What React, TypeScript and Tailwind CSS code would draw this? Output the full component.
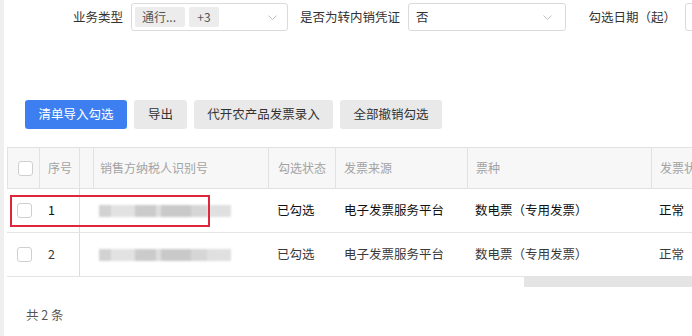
import React from "react";

const Chevron = () => (
  <svg width="9" height="5" viewBox="0 0 9 5" className="shrink-0">
    <polyline points="0.5,0.5 4.5,4.5 8.5,0.5" fill="none" stroke="#c0c0c0" strokeWidth="1" />
  </svg>
);

const Checkbox = () => (
  <div className="w-[15px] h-[15px] rounded-[3px] border border-[#cfcfcf] bg-white" />
);

const Blur = () => (
  <div className="w-[132px] h-[12px] blur-[1.2px] bg-[linear-gradient(90deg,#d2d2d2_0%,#d2d2d2_9%,#e2e2e2_9%,#e2e2e2_27%,#cbcbcb_27%,#cbcbcb_43%,#dedede_43%,#dedede_47%,#c9c9c9_47%,#c9c9c9_70%,#d6d6d6_70%,#d6d6d6_82%,#e0e0e0_82%,#e0e0e0_100%)]" />
);

const cols = [
  { w: "w-[33px]" },
  { w: "w-[40px]" },
  { w: "w-[14px]" },
  { w: "w-[175px]" },
  { w: "w-[67px]" },
  { w: "w-[132px]" },
  { w: "w-[184px]" },
  { w: "w-[100px]" },
];

const Row = ({ n, dark, marked }: { n: string; dark: boolean; marked?: boolean }) => (
  <div
    className={`relative flex h-[44px] border-b border-[#e4e4e4] text-[12.5px] ${
      dark ? "text-[#111]" : "text-[#3a3a3a]"
    }`}
  >
    <div className={`${cols[0].w} shrink-0 flex items-center pl-[10px]`}>
      <Checkbox />
    </div>
    <div className={`${cols[1].w} shrink-0 flex items-center pl-[8px] border-r border-[#dcdcdc]`}>{n}</div>
    <div className={`${cols[2].w} shrink-0`} />
    <div className={`${cols[3].w} shrink-0 flex items-center pl-[5px]`}>
      <Blur />
    </div>
    <div className={`${cols[4].w} shrink-0 flex items-center pl-[8px]`}>已勾选</div>
    <div className={`${cols[5].w} shrink-0 flex items-center pl-[8px]`}>电子发票服务平台</div>
    <div className={`${cols[6].w} shrink-0 flex items-center pl-[7px]`}>数电票（专用发票）</div>
    <div className={`${cols[7].w} shrink-0 flex items-center pl-[7px]`}>正常</div>
    {marked && (
      <div className="absolute left-[3px] top-[6px] w-[200px] h-[32px] border-2 border-[#e0263c]" />
    )}
  </div>
);

export default function App() {
  const headers = ["", "序号", "", "销售方纳税人识别号", "勾选状态", "发票来源", "票种", "发票状态"];
  return (
    <div
      className="w-[692px] h-[336px] overflow-hidden bg-white flex"
      style={{ fontFamily: '"Noto Sans CJK SC", "Noto Sans", sans-serif' }}
    >
      <div className="w-[4px] shrink-0 bg-[#efefef]" />
      <div className="flex-1 flex flex-col min-w-0">
        {/* filters */}
        <div className="mt-[3px] h-[28px] flex items-center text-[12.5px] text-[#333] whitespace-nowrap">
          <div className="w-[119px] shrink-0 text-right">业务类型</div>
          <div className="ml-[8px] w-[157px] h-[28px] shrink-0 border border-[#dadada] rounded-[3px] flex items-center pl-[3px] pr-[10px]">
            <div className="w-[50px] h-[20px] rounded-[2px] bg-[#ececec] text-[#555] text-[12px] flex items-center pl-[7px]">
              通行...
            </div>
            <div className="ml-[4px] w-[30px] h-[20px] rounded-[2px] bg-[#ececec] text-[#555] text-[12px] flex items-center justify-center">
              +3
            </div>
            <div className="flex-1" />
            <Chevron />
          </div>
          <div className="w-[112px] shrink-0 text-right">是否为转内销凭证</div>
          <div className="ml-[8px] w-[158px] h-[28px] shrink-0 border border-[#dadada] rounded-[3px] flex items-center pl-[7px] pr-[13px]">
            <span className="flex-1">否</span>
            <Chevron />
          </div>
          <div className="w-[110px] shrink-0 text-right">勾选日期（起）</div>
          <div className="ml-[9px] w-[100px] h-[28px] shrink-0 border border-[#dadada] rounded-[3px]" />
        </div>

        {/* buttons */}
        <div className="mt-[69px] pl-[21px] flex gap-[7px] text-[12.5px] whitespace-nowrap">
          <button className="w-[102px] h-[29px] rounded-[3px] bg-[#3d7ff0] text-white">清单导入勾选</button>
          <button className="w-[53px] h-[29px] rounded-[3px] bg-[#e9e9e9] text-[#333]">导出</button>
          <button className="w-[139px] h-[29px] rounded-[3px] bg-[#e9e9e9] text-[#333]">代开农产品发票录入</button>
          <button className="w-[102px] h-[29px] rounded-[3px] bg-[#e9e9e9] text-[#333]">全部撤销勾选</button>
        </div>

        {/* table */}
        <div className="mt-[18px] ml-[3px] flex flex-col whitespace-nowrap">
          <div className="flex h-[42px] bg-[#f7f7f7] border-t border-b border-[#e2e2e2] text-[12px] text-[#a3a3a3]">
            {headers.map((h, i) => (
              <div
                key={i}
                className={`${cols[i].w} shrink-0 flex items-center ${
                  i === 0 ? "pl-[10px] border-l" : i === 3 ? "pl-[6px]" : i === 4 ? "pl-[9px]" : "pl-[8px]"
                } ${i < 7 ? "border-r" : ""} border-[#e2e2e2]`}
              >
                {i === 0 ? <Checkbox /> : h}
              </div>
            ))}
          </div>
          <Row n="1" dark marked />
          <Row n="2" dark={false} />
          <div className="h-[10px] flex">
            <div className="w-[517px] shrink-0" />
            <div className="flex-1 bg-[#e4e4e4]" />
          </div>
        </div>

        <div className="mt-[19px] pl-[22px] text-[12.5px] text-[#555]">共 2 条</div>
      </div>
    </div>
  );
}
